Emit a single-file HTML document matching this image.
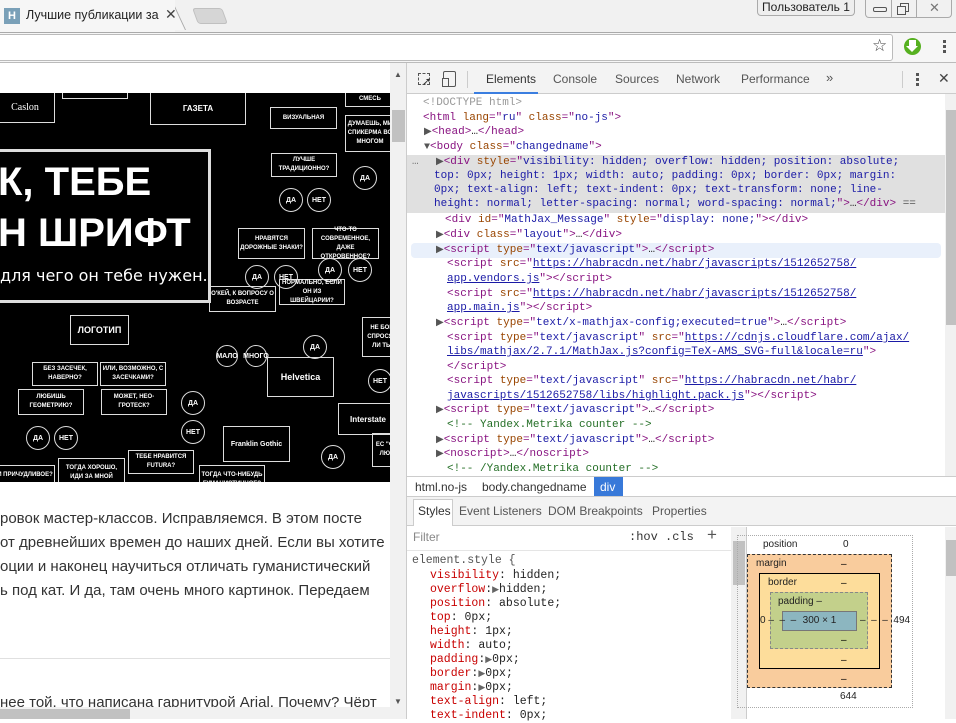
<!DOCTYPE html>
<html><head><meta charset="utf-8">
<style>
*{margin:0;padding:0;box-sizing:border-box}
body{width:956px;height:719px;overflow:hidden;position:relative;background:#fff;font-family:"Liberation Sans",sans-serif}
.a{position:absolute}
.m{font-family:"Liberation Mono",monospace;white-space:pre}
.dl{position:absolute;font-family:"Liberation Mono",monospace;font-size:11px;white-space:pre;line-height:14px;height:14px;color:#222}
.t{color:#881280}.n{color:#994500}.v{color:#1a1aa6}.u{color:#1a1aa6;text-decoration:underline}.g{color:#236e25}.gr{color:#999}
.ar{color:#555;font-size:10px}
.box{position:absolute;border:1px solid #ddd;color:#fff;font-size:8px;font-weight:bold;text-align:center;display:flex;align-items:center;justify-content:center;line-height:9px}
.c{position:absolute;border:1px solid #ddd;border-radius:50%;color:#fff;font-size:7px;font-weight:bold;display:flex;align-items:center;justify-content:center}
.pt{position:absolute;left:0;font-size:15px;color:#333;white-space:nowrap}
.sl{position:absolute;left:430px;font-family:"Liberation Mono",monospace;font-size:11.5px;white-space:pre;color:#222;line-height:14px}
.sl b{font-weight:normal;color:#c80000}
</style></head><body>
<!-- tab strip -->
<div class="a" style="left:0;top:0;width:956px;height:33px;background:#f1f1f1"></div>
<div class="a" style="left:0;top:0;width:186px;height:30px;background:#f6f6f6;border-right:1px solid #aaa;transform:skewX(25deg);transform-origin:bottom;border-top:1px solid #bbb"></div>
<div class="a" style="left:0;top:0;width:175px;height:33px;background:#f6f6f6"></div>
<div class="a" style="left:4px;top:8px;width:16px;height:16px;background:#7aa0b8;color:#fff;font-size:11px;font-weight:bold;text-align:center;line-height:16px">H</div>
<div class="a" style="left:26px;top:8px;font-size:12.5px;color:#222;white-space:nowrap">Лучшие публикации за</div>
<div class="a" style="left:165px;top:6px;font-size:14px;color:#444">✕</div>
<div class="a" style="left:195px;top:8px;width:30px;height:16px;background:#d6d6d6;border:1px solid #c0c0c0;border-radius:3px;transform:skewX(20deg)"></div>
<div class="a" style="left:0;top:32px;width:956px;height:1px;background:#aaa"></div>
<div class="a" style="left:757px;top:0;width:98px;height:16px;border:1px solid #aaa;border-top:none;border-radius:0 0 4px 4px;font-size:12px;color:#222;text-align:center;line-height:15px;background:#eee">Пользователь 1</div>
<div class="a" style="left:865px;top:0;width:87px;height:18px;border:1px solid #aaa;border-top:none;border-radius:0 0 4px 4px;background:#f1f1f1"></div>
<div class="a" style="left:891px;top:0;width:1px;height:18px;background:#aaa"></div>
<div class="a" style="left:916px;top:0;width:1px;height:18px;background:#aaa"></div>
<div class="a" style="left:873px;top:7px;width:14px;height:5px;border:1px solid #555;border-radius:2px"></div>
<div class="a" style="left:900px;top:3px;width:9px;height:9px;border:1px solid #555"></div>
<div class="a" style="left:897px;top:6px;width:9px;height:9px;border:1px solid #555;background:#f1f1f1"></div>
<div class="a" style="left:929px;top:0;font-size:13px;color:#777">✕</div>
<!-- toolbar -->
<div class="a" style="left:0;top:33px;width:956px;height:30px;background:#f6f6f6"></div>
<div class="a" style="left:-5px;top:34px;width:898px;height:27px;background:#fff;border:1px solid #bbb;border-radius:3px"></div>
<div class="a" style="left:872px;top:36px;font-size:17px;color:#444">☆</div>
<div class="a" style="left:904px;top:38px;width:17px;height:17px;border-radius:50%;background:#56b020"></div>
<div class="a" style="left:909px;top:40px;width:7px;height:7px;background:#fff"></div>
<div class="a" style="left:906px;top:46px;width:0;height:0;border-left:6px solid transparent;border-right:6px solid transparent;border-top:6px solid #fff"></div>
<div class="a" style="left:943px;top:40px;width:3px;height:3px;background:#555;box-shadow:0 5px #555,0 10px #555"></div>
<div class="a" style="left:0;top:62px;width:956px;height:1px;background:#bbb"></div>
<!-- page -->
<div class="a" style="left:0;top:93px;width:390px;height:389px;background:#000;overflow:hidden">
 <div class="box" style="left:-5px;top:-2px;width:60px;height:32px;font-family:'Liberation Serif',serif;font-weight:normal;font-size:10px">Caslon</div>
 <div class="box" style="left:62px;top:-2px;width:66px;height:8px"></div>
 <div class="box" style="left:150px;top:-2px;width:96px;height:34px">ГАЗЕТА</div>
 <div class="box" style="left:270px;top:14px;width:67px;height:22px;font-size:6px">ВИЗУАЛЬНАЯ</div>
 <div class="box" style="left:345px;top:-2px;width:50px;height:16px;font-size:6px">СМЕСЬ</div>
 <div class="box" style="left:345px;top:22px;width:50px;height:37px;font-size:6px">ДУМАЕШЬ, МИ СПИКЕРМА ВО МНОГОМ</div>
 <div class="box" style="left:271px;top:60px;width:66px;height:24px;font-size:6px">ЛУЧШЕ ТРАДИЦИОННО?</div>
 <div class="c" style="left:279px;top:95px;width:24px;height:24px">ДА</div>
 <div class="c" style="left:307px;top:95px;width:24px;height:24px">НЕТ</div>
 <div class="c" style="left:353px;top:73px;width:24px;height:24px">ДА</div>
 <div class="box" style="left:238px;top:135px;width:67px;height:31px;font-size:6px">НРАВЯТСЯ ДОРОЖНЫЕ ЗНАКИ?</div>
 <div class="box" style="left:312px;top:135px;width:67px;height:31px;font-size:6px">ЧТО-ТО СОВРЕМЕННОЕ, ДАЖЕ ОТКРОВЕННОЕ?</div>
 <div class="c" style="left:245px;top:172px;width:24px;height:24px">ДА</div>
 <div class="c" style="left:274px;top:172px;width:24px;height:24px">НЕТ</div>
 <div class="c" style="left:318px;top:165px;width:24px;height:24px">ДА</div>
 <div class="c" style="left:348px;top:165px;width:24px;height:24px">НЕТ</div>
 <div class="box" style="left:279px;top:121px;width:65px;height:14px;border:none"></div>
 <div class="box" style="left:209px;top:193px;width:67px;height:26px;font-size:6px">О'КЕЙ, К ВОПРОСУ О ВОЗРАСТЕ</div>
 <div class="box" style="left:279px;top:186px;width:66px;height:26px;font-size:6px">НОРМАЛЬНО, ЕСЛИ ОН ИЗ ШВЕЙЦАРИИ?</div>
 <div class="c" style="left:216px;top:252px;width:22px;height:22px">МАЛО</div>
 <div class="c" style="left:245px;top:252px;width:22px;height:22px">МНОГО</div>
 <div class="c" style="left:303px;top:242px;width:24px;height:24px">ДА</div>
 <div class="box" style="left:362px;top:224px;width:40px;height:40px;font-size:6px">НЕ БОИ СПРОСЯТ ЛИ ТЫ</div>
 <div class="c" style="left:368px;top:276px;width:24px;height:24px">НЕТ</div>
 <div class="box" style="left:267px;top:264px;width:67px;height:40px;font-size:9px">Helvetica</div>
 <div class="box" style="left:338px;top:310px;width:60px;height:32px;font-size:8px">Interstate</div>
 <div class="box" style="left:70px;top:222px;width:59px;height:30px;font-size:9px">ЛОГОТИП</div>
 <div class="box" style="left:32px;top:269px;width:66px;height:24px;font-size:6px">БЕЗ ЗАСЕЧЕК, НАВЕРНО?</div>
 <div class="box" style="left:100px;top:269px;width:66px;height:24px;font-size:6px">ИЛИ, ВОЗМОЖНО, С ЗАСЕЧКАМИ?</div>
 <div class="box" style="left:18px;top:296px;width:66px;height:26px;font-size:6px">ЛЮБИШЬ ГЕОМЕТРИЮ?</div>
 <div class="box" style="left:101px;top:296px;width:66px;height:26px;font-size:6px">МОЖЕТ, НЕО-ГРОТЕСК?</div>
 <div class="c" style="left:181px;top:298px;width:24px;height:24px">ДА</div>
 <div class="c" style="left:181px;top:327px;width:24px;height:24px">НЕТ</div>
 <div class="c" style="left:26px;top:333px;width:24px;height:24px">ДА</div>
 <div class="c" style="left:54px;top:333px;width:24px;height:24px">НЕТ</div>
 <div class="box" style="left:223px;top:333px;width:67px;height:36px;font-size:7px">Franklin Gothic</div>
 <div class="box" style="left:128px;top:357px;width:66px;height:24px;font-size:6px">ТЕБЕ НРАВИТСЯ FUTURA?</div>
 <div class="box" style="left:58px;top:365px;width:67px;height:30px;font-size:6px">ТОГДА ХОРОШО, ИДИ ЗА МНОЙ</div>
 <div class="box" style="left:199px;top:372px;width:66px;height:30px;font-size:6px">ТОГДА ЧТО-НИБУДЬ ГУМАНИСТИЧНОЕ?</div>
 <div class="box" style="left:-5px;top:372px;width:60px;height:20px;font-size:6px">И ПРИЧУДЛИВОЕ?</div>
 <div class="c" style="left:321px;top:352px;width:24px;height:24px">ДА</div>
 <div class="box" style="left:372px;top:340px;width:30px;height:34px;font-size:6px">ЕС "ФА ЛЮБ</div>
 <div class="a" style="left:-10px;top:56px;width:221px;height:154px;border:3px solid #ddd;background:#000"></div>
 <div class="a" style="left:-2px;top:66px;color:#fff;font-size:40px;font-weight:bold;white-space:nowrap;line-height:46px">К, ТЕБЕ</div>
 <div class="a" style="left:-2px;top:117px;color:#fff;font-size:40px;font-weight:bold;white-space:nowrap;line-height:46px">Н ШРИФТ</div>
 <div class="a" style="left:0;top:173px;color:#fff;font-size:16px;white-space:nowrap;font-family:'DejaVu Sans',sans-serif">для чего он тебе нужен.</div>
</div>
<div class="pt" style="top:510px">ровок мастер-классов. Исправляемся. В этом посте</div>
<div class="pt" style="top:534px">от древнейших времен до наших дней. Если вы хотите</div>
<div class="pt" style="top:558px">оции и наконец научиться отличать гуманистический</div>
<div class="pt" style="top:582px">ь под кат. И да, там очень много картинок. Передаем</div>
<div class="a" style="left:0;top:658px;width:390px;height:1px;background:#e0e0e0"></div>
<div class="pt" style="top:694px">нее той, что написана гарнитурой Arial. Почему? Чёрт</div>
<div class="a" style="left:390px;top:63px;width:16px;height:656px;background:#f1f1f1"></div>
<div class="a" style="left:392px;top:110px;width:13px;height:32px;background:#c1c1c1"></div>
<div class="a" style="left:394px;top:70px;font-size:8px;color:#555">▲</div>
<div class="a" style="left:394px;top:697px;font-size:8px;color:#555">▼</div>
<div class="a" style="left:0;top:707px;width:390px;height:12px;background:#f1f1f1"></div>
<div class="a" style="left:0;top:709px;width:130px;height:10px;background:#c1c1c1"></div>
<div class="a" style="left:406px;top:63px;width:1px;height:656px;background:#ccc"></div>
<!-- devtools toolbar -->
<div class="a" style="left:407px;top:63px;width:549px;height:31px;background:#f3f3f3;border-bottom:1px solid #ccc"></div>
<div class="a" style="left:418px;top:73px;width:12px;height:12px;border:1.5px dashed #555"></div>
<div class="a" style="left:422px;top:77px;font-size:11px;color:#333;line-height:11px">➚</div>
<div class="a" style="left:443px;top:71px;width:13px;height:16px;border:1.5px solid #555;border-radius:2px"></div>
<div class="a" style="left:442px;top:78px;width:7px;height:9px;border:1.5px solid #555;background:#f3f3f3"></div>
<div class="a" style="left:467px;top:71px;width:1px;height:17px;background:#ccc"></div>
<div class="a" style="left:474px;top:92px;width:64px;height:2px;background:#3b7ee0"></div>
<div class="a" style="left:486px;top:72px;font-size:12px;color:#333">Elements</div>
<div class="a" style="left:553px;top:72px;font-size:12px;color:#555">Console</div>
<div class="a" style="left:615px;top:72px;font-size:12px;color:#555">Sources</div>
<div class="a" style="left:676px;top:72px;font-size:12px;color:#555">Network</div>
<div class="a" style="left:741px;top:72px;font-size:12px;color:#555">Performance</div>
<div class="a" style="left:826px;top:70px;font-size:13px;color:#555">»</div>
<div class="a" style="left:902px;top:71px;width:1px;height:17px;background:#ccc"></div>
<div class="a" style="left:916px;top:73px;width:3px;height:3px;background:#555;box-shadow:0 5px #555,0 10px #555"></div>
<div class="a" style="left:938px;top:70px;font-size:14px;color:#444">✕</div>
<!-- DOM -->
<div class="a" style="left:407px;top:155px;width:538px;height:58px;background:#e0e0e0"></div>
<div class="a" style="left:411px;top:243px;width:530px;height:15px;background:#e9f0fb;border-radius:4px"></div>
<div class="dl" style="left:412px;top:155px;color:#777">…</div>
<div class="dl" style="left:423px;top:96px"><span class="gr">&lt;!DOCTYPE html&gt;</span></div>
<div class="dl" style="left:423px;top:111px"><span class="t">&lt;html</span> <span class="n">lang</span><span class="t">="</span><span class="v">ru</span><span class="t">"</span> <span class="n">class</span><span class="t">="</span><span class="v">no-js</span><span class="t">"&gt;</span></div>
<div class="dl" style="left:424px;top:125px"><span class="ar">▶</span><span class="t">&lt;head&gt;</span>…<span class="t">&lt;/head&gt;</span></div>
<div class="dl" style="left:424px;top:140px"><span class="ar">▼</span><span class="t">&lt;body</span> <span class="n">class</span><span class="t">="</span><span class="v">changedname</span><span class="t">"&gt;</span></div>
<div class="dl" style="left:436px;top:155px"><span class="ar">▶</span><span class="t">&lt;div</span> <span class="n">style</span><span class="t">="</span><span class="v">visibility: hidden; overflow: hidden; position: absolute;</span></div>
<div class="dl" style="left:434px;top:169px"><span class="v">top: 0px; height: 1px; width: auto; padding: 0px; border: 0px; margin:</span></div>
<div class="dl" style="left:434px;top:183px"><span class="v">0px; text-align: left; text-indent: 0px; text-transform: none; line-</span></div>
<div class="dl" style="left:434px;top:197px"><span class="v">height: normal; letter-spacing: normal; word-spacing: normal;</span><span class="t">"&gt;</span>…<span class="t">&lt;/div&gt;</span> <span style="color:#555">==</span></div>
<div class="dl" style="left:445px;top:213px"><span class="t">&lt;div</span> <span class="n">id</span><span class="t">="</span><span class="v">MathJax_Message</span><span class="t">"</span> <span class="n">style</span><span class="t">="</span><span class="v">display: none;</span><span class="t">"&gt;&lt;/div&gt;</span></div>
<div class="dl" style="left:436px;top:228px"><span class="ar">▶</span><span class="t">&lt;div</span> <span class="n">class</span><span class="t">="</span><span class="v">layout</span><span class="t">"&gt;</span>…<span class="t">&lt;/div&gt;</span></div>
<div class="dl" style="left:436px;top:243px"><span class="ar">▶</span><span class="t">&lt;script</span> <span class="n">type</span><span class="t">="</span><span class="v">text/javascript</span><span class="t">"&gt;</span>…<span class="t">&lt;/script&gt;</span></div>
<div class="dl" style="left:447px;top:257px"><span class="t">&lt;script</span> <span class="n">src</span><span class="t">="</span><span class="u">https://habracdn.net/habr/javascripts/1512652758/</span></div>
<div class="dl" style="left:447px;top:272px"><span class="u">app.vendors.js</span><span class="t">"&gt;&lt;/script&gt;</span></div>
<div class="dl" style="left:447px;top:287px"><span class="t">&lt;script</span> <span class="n">src</span><span class="t">="</span><span class="u">https://habracdn.net/habr/javascripts/1512652758/</span></div>
<div class="dl" style="left:447px;top:301px"><span class="u">app.main.js</span><span class="t">"&gt;&lt;/script&gt;</span></div>
<div class="dl" style="left:436px;top:316px"><span class="ar">▶</span><span class="t">&lt;script</span> <span class="n">type</span><span class="t">="</span><span class="v">text/x-mathjax-config;executed=true</span><span class="t">"&gt;</span>…<span class="t">&lt;/script&gt;</span></div>
<div class="dl" style="left:447px;top:331px"><span class="t">&lt;script</span> <span class="n">type</span><span class="t">="</span><span class="v">text/javascript</span><span class="t">"</span> <span class="n">src</span><span class="t">="</span><span class="u">https://cdnjs.cloudflare.com/ajax/</span></div>
<div class="dl" style="left:447px;top:345px"><span class="u">libs/mathjax/2.7.1/MathJax.js?config=TeX-AMS_SVG-full&amp;locale=ru</span><span class="t">"&gt;</span></div>
<div class="dl" style="left:447px;top:360px"><span class="t">&lt;/script&gt;</span></div>
<div class="dl" style="left:447px;top:374px"><span class="t">&lt;script</span> <span class="n">type</span><span class="t">="</span><span class="v">text/javascript</span><span class="t">"</span> <span class="n">src</span><span class="t">="</span><span class="u">https://habracdn.net/habr/</span></div>
<div class="dl" style="left:447px;top:389px"><span class="u">javascripts/1512652758/libs/highlight.pack.js</span><span class="t">"&gt;&lt;/script&gt;</span></div>
<div class="dl" style="left:436px;top:403px"><span class="ar">▶</span><span class="t">&lt;script</span> <span class="n">type</span><span class="t">="</span><span class="v">text/javascript</span><span class="t">"&gt;</span>…<span class="t">&lt;/script&gt;</span></div>
<div class="dl" style="left:447px;top:418px"><span class="g">&lt;!-- Yandex.Metrika counter --&gt;</span></div>
<div class="dl" style="left:436px;top:433px"><span class="ar">▶</span><span class="t">&lt;script</span> <span class="n">type</span><span class="t">="</span><span class="v">text/javascript</span><span class="t">"&gt;</span>…<span class="t">&lt;/script&gt;</span></div>
<div class="dl" style="left:436px;top:447px"><span class="ar">▶</span><span class="t">&lt;noscript&gt;</span>…<span class="t">&lt;/noscript&gt;</span></div>
<div class="dl" style="left:447px;top:462px"><span class="g">&lt;!-- /Yandex.Metrika counter --&gt;</span></div>
<div class="a" style="left:945px;top:94px;width:11px;height:382px;background:#f1f1f1"></div>
<div class="a" style="left:946px;top:110px;width:10px;height:215px;background:#c1c1c1"></div>
<!-- breadcrumb -->
<div class="a" style="left:407px;top:476px;width:549px;height:21px;background:#fff;border-top:1px solid #ccc;border-bottom:1px solid #ccc"></div>
<div class="a" style="left:415px;top:480px;font-size:12px;color:#333">html.no-js</div>
<div class="a" style="left:482px;top:480px;font-size:12px;color:#333">body.changedname</div>
<div class="a" style="left:594px;top:477px;width:29px;height:19px;background:#3879d9"></div>
<div class="a" style="left:600px;top:480px;font-size:12px;color:#fff">div</div>
<!-- tabs -->
<div class="a" style="left:407px;top:497px;width:549px;height:29px;background:#f3f3f3;border-bottom:1px solid #ccc"></div>
<div class="a" style="left:413px;top:499px;width:40px;height:27px;background:#fff;border:1px solid #ccc;border-bottom:none"></div>
<div class="a" style="left:418px;top:504px;font-size:12px;color:#333">Styles</div>
<div class="a" style="left:459px;top:504px;font-size:12px;color:#555">Event Listeners</div>
<div class="a" style="left:548px;top:504px;font-size:12px;color:#555">DOM Breakpoints</div>
<div class="a" style="left:652px;top:504px;font-size:12px;color:#555">Properties</div>
<!-- styles -->
<div class="a" style="left:413px;top:530px;font-size:12px;color:#888">Filter</div>
<div class="a m" style="left:629px;top:530px;font-size:12px;color:#333">:hov .cls</div>
<div class="a" style="left:707px;top:525px;font-size:17px;color:#555">+</div>
<div class="a" style="left:407px;top:550px;width:324px;height:1px;background:#e5e5e5"></div>
<div class="sl" style="left:412px;top:554px;color:#555">element.style {</div>
<div class="sl" style="top:569px"><b>visibility</b>: hidden;</div>
<div class="sl" style="top:583px"><b>overflow</b>:<span style="color:#666;font-size:9px">▶</span>hidden;</div>
<div class="sl" style="top:597px"><b>position</b>: absolute;</div>
<div class="sl" style="top:611px"><b>top</b>: 0px;</div>
<div class="sl" style="top:625px"><b>height</b>: 1px;</div>
<div class="sl" style="top:639px"><b>width</b>: auto;</div>
<div class="sl" style="top:653px"><b>padding</b>:<span style="color:#666;font-size:9px">▶</span>0px;</div>
<div class="sl" style="top:667px"><b>border</b>:<span style="color:#666;font-size:9px">▶</span>0px;</div>
<div class="sl" style="top:681px"><b>margin</b>:<span style="color:#666;font-size:9px">▶</span>0px;</div>
<div class="sl" style="top:695px"><b>text-align</b>: left;</div>
<div class="sl" style="top:709px"><b>text-indent</b>: 0px;</div>
<div class="a" style="left:731px;top:527px;width:15px;height:192px;background:#f1f1f1"></div>
<div class="a" style="left:733px;top:541px;width:12px;height:44px;background:#c1c1c1"></div>
<div class="a" style="left:746px;top:527px;width:1px;height:192px;background:#ccc"></div>
<!-- box model -->
<div class="a" style="left:737px;top:535px;width:176px;height:173px;border:1px dotted #aaa"></div>
<div class="a" style="left:763px;top:539px;font-size:10px;color:#222">position</div>
<div class="a" style="left:843px;top:539px;font-size:10px;color:#222">0</div>
<div class="a" style="left:747px;top:554px;width:145px;height:134px;background:#f9cc9d;border:1px dashed #333"></div>
<div class="a" style="left:756px;top:558px;font-size:10px;color:#222">margin</div>
<div class="a" style="left:759px;top:573px;width:121px;height:96px;background:#fddd9b;border:1px solid #000"></div>
<div class="a" style="left:768px;top:577px;font-size:10px;color:#222">border</div>
<div class="a" style="left:770px;top:592px;width:98px;height:57px;background:#c3d08b;border:1px dashed #888"></div>
<div class="a" style="left:778px;top:596px;font-size:10px;color:#222">padding –</div>
<div class="a" style="left:782px;top:611px;width:75px;height:20px;background:#8cb6c0;border:1px solid #777;font-size:10px;color:#222;text-align:center;line-height:18px">300 × 1</div>
<div class="a" style="left:760px;top:615px;font-size:10px;color:#222;white-space:pre">0 –  –  –                       –  –  –  494</div>
<div class="a" style="left:841px;top:559px;font-size:10px">–</div>
<div class="a" style="left:841px;top:578px;font-size:10px">–</div>
<div class="a" style="left:841px;top:635px;font-size:10px">–</div>
<div class="a" style="left:841px;top:655px;font-size:10px">–</div>
<div class="a" style="left:841px;top:674px;font-size:10px">–</div>
<div class="a" style="left:840px;top:691px;font-size:10px;color:#222">644</div>
<div class="a" style="left:945px;top:527px;width:11px;height:192px;background:#f1f1f1"></div>
<div class="a" style="left:946px;top:540px;width:10px;height:36px;background:#c1c1c1"></div>
</body></html>
